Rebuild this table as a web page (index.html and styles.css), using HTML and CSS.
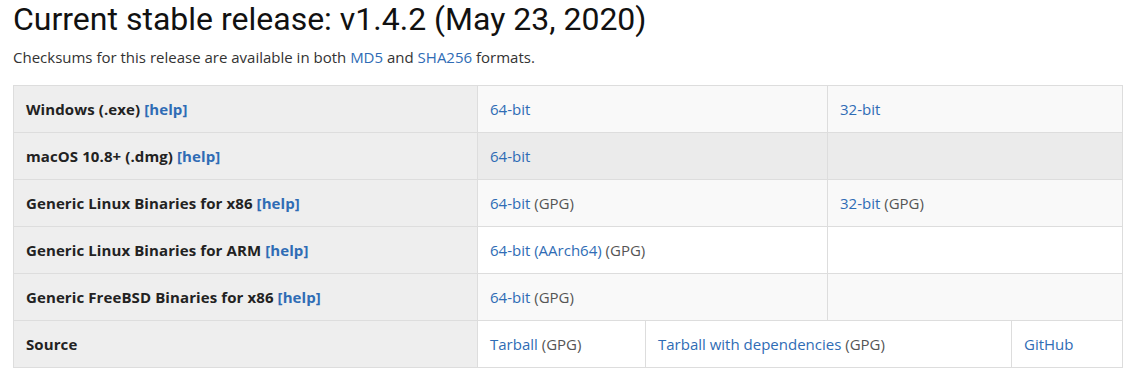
FILE: index.html
```html
<!DOCTYPE html>
<html>
<head>
<meta charset="utf-8">
<link rel="stylesheet" href="styles.css">
</head>
<body>
<h1 class="title">Current stable release: v1.4.2 (May 23, 2020)</h1>
<p class="note">Checksums for this release are available in both <a href="#">MD5</a> and <a href="#">SHA256</a> formats.</p>
<table class="dl">
  <colgroup>
    <col class="c0"><col class="c1"><col class="c2"><col class="c3"><col class="c4">
  </colgroup>
  <tbody>
    <tr class="odd">
      <th>Windows (.exe) <a href="#">[help]</a></th>
      <td colspan="2"><a href="#">64-bit</a></td>
      <td colspan="2"><a href="#">32-bit</a></td>
    </tr>
    <tr class="hover">
      <th>macOS 10.8+ (.dmg) <a href="#">[help]</a></th>
      <td colspan="2"><a href="#">64-bit</a></td>
      <td colspan="2"></td>
    </tr>
    <tr class="odd">
      <th>Generic Linux Binaries for x86 <a href="#">[help]</a></th>
      <td colspan="2"><a href="#">64-bit</a> <a class="gpg" href="#">(GPG)</a></td>
      <td colspan="2"><a href="#">32-bit</a> <a class="gpg" href="#">(GPG)</a></td>
    </tr>
    <tr>
      <th>Generic Linux Binaries for ARM <a href="#">[help]</a></th>
      <td colspan="2"><a href="#">64-bit (AArch64)</a> <a class="gpg" href="#">(GPG)</a></td>
      <td colspan="2"></td>
    </tr>
    <tr class="odd">
      <th>Generic FreeBSD Binaries for x86 <a href="#">[help]</a></th>
      <td colspan="2"><a href="#">64-bit</a> <a class="gpg" href="#">(GPG)</a></td>
      <td colspan="2"></td>
    </tr>
    <tr>
      <th>Source</th>
      <td><a href="#">Tarball</a> <a class="gpg" href="#">(GPG)</a></td>
      <td colspan="2"><a href="#">Tarball with dependencies</a> <a class="gpg" href="#">(GPG)</a></td>
      <td><a href="#">GitHub</a></td>
    </tr>
  </tbody>
</table>
</body>
</html>
```

FILE: styles.css
```css
html, body {
  margin: 0;
  padding: 0;
  background: #fff;
}
body {
  padding: 0 13px;
  font-family: "Open Sans", "Noto Sans", sans-serif;
  color: #333;
}
.title {
  margin: 0;
  font-family: Roboto, "Liberation Sans", sans-serif;
  font-weight: 400;
  font-size: 32px;
  line-height: 38px;
  color: #111;
}
.note {
  margin: 9px 0 18px;
  font-size: 15px;
  line-height: 20px;
  color: #333;
}
a {
  color: #2f6cb5;
  text-decoration: none;
}
.dl {
  width: 1110px;
  border-collapse: collapse;
  table-layout: fixed;
  border: 1px solid #ddd;
  font-size: 15px;
}
.c0 { width: 464px; }
.c1 { width: 168px; }
.c2 { width: 182px; }
.c3 { width: 184px; }
.c4 { width: 111px; }
.dl th, .dl td {
  box-sizing: border-box;
  height: 47px;
  padding: 0 12px;
  border: 1px solid #ddd;
  text-align: left;
  vertical-align: middle;
}
.dl th {
  background: #eee;
  color: #222;
  font-weight: 700;
  letter-spacing: 0.1px;
}
.dl td {
  background: #fff;
}
.dl tr.odd td {
  background: #f9f9f9;
}
.dl tr.hover td {
  background: #ebebeb;
}
.dl a.gpg {
  color: #555;
}
```
